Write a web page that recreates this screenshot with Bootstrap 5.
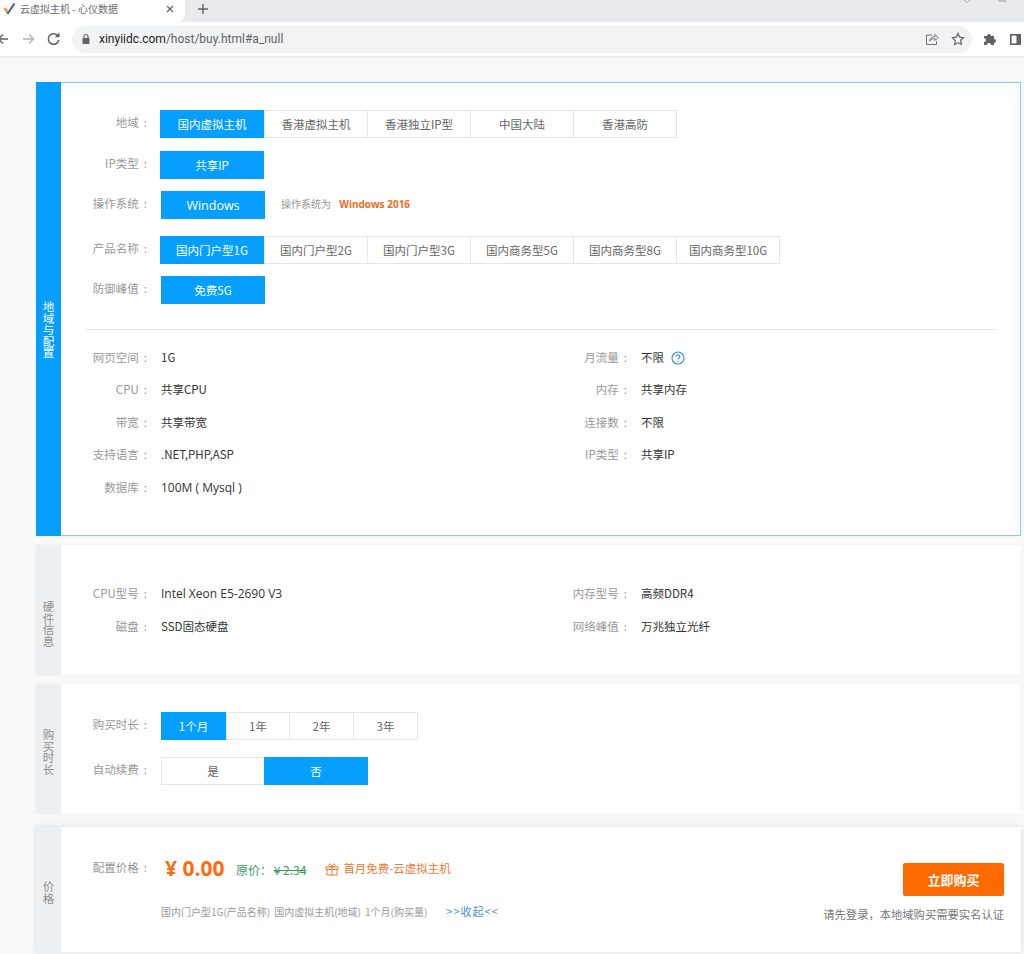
<!DOCTYPE html>
<html lang="zh-CN">
<head>
  <meta charset="UTF-8"/>
  <meta name="viewport" content="width=device-width, initial-scale=1.0"/>
  <title>云虚拟主机 - 心仪数据</title>
  <link rel="stylesheet" href="https://cdn.jsdelivr.net/npm/bootstrap@5.3.0/dist/css/bootstrap.min.css"/>
  <style>
    html, body { height: 954px; overflow: hidden; }
    body { background: #f9f9f9; font: 11.5px/1.5 "Noto Sans CJK SC", sans-serif; color: #333; }

    /* browser chrome */
    .tab-strip { height: 22px; background: #e8eaed; }
    .tab-active { width: 185px; background: #fff; border-bottom-right-radius: 8px; color: #6a6d71; font-size: 10px; padding: 0 0 5px 3px; }
    .tab-title { margin-left: 4px; width: 145px; }
    .tool-bar { height: 34px; background: #fff; border-bottom: 2px solid #ececec; box-sizing: content-box; }
    .omni { width: 900px; height: 27px; margin-left: 3px; background: #f1f3f4; border-radius: 14px; padding: 0 7px 0 9px; font: 12px "Roboto", sans-serif; color: #5f6368; }
    .omni b { font-weight: 400; color: #202124; }
    .lock-icon { margin-right: 8px; }
    .nav-icons { width: 72px; margin-left: -3px; }
    .win-marks { margin-left: auto; width: 60px; }
    .star-gap { margin-left: 12px; }
    .puzzle-gap { margin-left: 11px; }
    .sidepanel-gap { margin-left: 13px; }

    /* panels */
    .page-wrap { padding: 24px 3px 0 36px; }
    .buy-panel { background: #fff; box-shadow: 0 0 2px rgba(0,0,0,.07); }
    .side-tab { width: 25px; flex: none; background: #edf0f2; color: #8f8f8f; }
    .side-tab span { width: 12px; font-size: 11.5px; line-height: 11.5px; text-align: center; }
    .panel-region { height: 454px; margin-bottom: 9px; border: 1px solid #8fcde6; border-left: 0; }
    .panel-region .side-tab { background: #069fff; color: #fff; margin-top: -1px; margin-bottom: -1px; padding-top: 42px; }
    .panel-hardware { height: 130px; margin-bottom: 9px; }
    .panel-hardware .side-tab { padding-top: 28px; }
    .panel-time { height: 130px; margin-bottom: 13px; }
    .panel-time .side-tab { padding-top: 6px; }
    .panel-price { height: 125px; box-shadow: 0 0 6px rgba(0,0,0,.14); }
    .panel-price .side-tab { padding-top: 6px; }
    .panel-inner { padding-left: 25px; padding-right: 25px; }

    .lbl { width: 61px; flex: none; text-align: right; color: #999; white-space: pre; word-spacing: 2.5px; }
    .opt-row { height: 28px; }
    .opt-row .lbl { margin-top: -3px; }
    .opts { margin-left: 13px; }
    .opts.nudge { margin-left: 14px; }
    .opt { display: block; width: 104px; height: 28px; line-height: 26px; margin-left: -1px; border: 1px solid #e6e6e6; border-radius: 0; padding: 0; text-align: center; color: #666; background: #fff; text-decoration: none; }
    .opt:first-child { margin-left: 0; }
    .opt:first-child + .opt { margin-left: 0; }
    .opts.nudge .opt:first-child + .opt { margin-left: -1px; }
    .opt.on { background: #069fff; border-color: #069fff; color: #fff; position: relative; }
    .opt.sm { width: 65px; }
    .opts.nudge .opt.sm:nth-child(2) { margin-left: 0; width: 64px; }
    .opt-win { font: 12.5px/27px "Open Sans", sans-serif; }
    .region-body { padding: 27px 25px 0 25px; }
    .os-note { margin: 0 0 4px 16px; font-size: 10px; color: #999; }
    .os-note b { margin-left: 6px; color: #f26a1b; font: 700 10px "Open Sans", sans-serif; }
    .divider { margin: 25px 0 11px; border-top: 1px solid #e4e4e4; opacity: 1; }
    .spec-grid { display: grid; grid-template-columns: 480px 1fr; grid-auto-rows: 32.5px; }
    .spec { height: 32.5px; }
    .spec .val { margin-left: 14px; color: #333; }
    .spec .val-latin { font: 12px "Open Sans", sans-serif; }
    .help-dot { margin: 2px 0 0 7px; }

    .time-body { padding-top: 28px; }
    .price-body { padding-top: 29px; }
    .price-body .lbl { margin-top: -1px; }
    .price-num { font: 700 21px/24px "Open Sans", sans-serif; color: #ff6a0c; margin-left: 18px; width: 71px; }
    .old-price { color: #3c9a5f; font-size: 12px; margin-top: 4px; }
    .old-price s { margin-left: -1px; }
    .promo { color: #ea7a33; font-size: 11.5px; margin: 2px 0 0 19px; }
    .summary { font-size: 10px; color: #999; margin: 23px 0 0 75px; }
    .summary span { margin-right: 4px; }
    .fold-link { color: #4a90d9; font-size: 11px; margin-left: 15px; letter-spacing: 1px; text-decoration: none; }
    .buy-btn { width: 101px; height: 33px; background: #ff6a00; color: #fff; border: 0; border-radius: 2px; font: 700 13px/33px "Noto Sans CJK SC", sans-serif; padding: 0; }
    .buy-note { font-size: 11.3px; color: #777; margin-top: 10px; white-space: nowrap; }
    .price-right { width: 200px; padding: 36px 17px 0 0; }
  </style>
</head>
<body>
  <!-- browser frame -->
  <div class="tab-strip d-flex">
    <div class="tab-active d-flex align-items-center">
      <svg width="13" height="13" viewBox="0 0 13 13"><path d="M2 6.500 5 11 11.500 1.500" fill="none" stroke="#3c5a8a" stroke-width="2"/><path d="M1.500 6 4.500 10" stroke="#f0a030" stroke-width="2.500"/></svg>
      <span class="tab-title">云虚拟主机 - 心仪数据</span>
      <svg width="10" height="10" viewBox="0 0 10 10"><path d="M2 2l6 6M8 2l-6 6" stroke="#5f6368" stroke-width="1.200"/></svg>
    </div>
    <svg class="ms-2" width="20" height="18" viewBox="0 0 20 18"><path d="M10 4v10M5 9h10" stroke="#5f6368" stroke-width="1.400"/></svg>
    <svg class="win-marks" width="60" height="4" viewBox="0 0 60 4"><path d="M0 0l3 2.500L6 0" fill="none" stroke="#aaa"/><path d="M34 1h8" stroke="#999"/></svg>
  </div>
  <div class="tool-bar d-flex align-items-center">
    <div class="nav-icons d-flex align-items-center">
      <svg width="72" height="16" viewBox="0 0 72 16">
        <path d="M11 8H2M6 3.500 1.500 8 6 12.500" fill="none" stroke="#5f6368" stroke-width="1.500"/>
        <path d="M26 8h10M32 3.500 36.500 8 32 12.500" fill="none" stroke="#b4b7ba" stroke-width="1.500"/>
        <path d="M61 5a5.300 5.300 0 1 0 .8 4" fill="none" stroke="#5f6368" stroke-width="1.500"/><path d="M62.500 1.500v4.800h-4.800z" fill="#5f6368"/>
      </svg>
    </div>
    <div class="omni d-flex align-items-center">
      <svg class="lock-icon" width="10" height="12" viewBox="0 0 10 12"><path d="M3 5V3.500a2 2 0 0 1 4 0V5" fill="none" stroke="#5f6368" stroke-width="1.200"/><rect x="1.500" y="5" width="7" height="6" rx="1" fill="#5f6368"/></svg>
      <span><b>xinyiidc.com</b>/host/buy.html#a_null</span>
      <svg class="ms-auto" width="14" height="13" viewBox="0 0 14 13"><path d="M7 2H1.500v9.500h10V8M4.500 8c.5-3 3-4.500 5.500-4.500V1.500L13 4.500 10 7.500V5.500C8 5.500 6 6 4.500 8z" fill="none" stroke="#6f7276"/></svg>
      <svg class="star-gap" width="14" height="14" viewBox="0 0 14 14"><path d="M7 1.500l1.700 3.600 3.800.5-2.800 2.700.7 3.900L7 10.800l-3.400 1.900.7-3.900L1.500 5.600l3.800-.5z" fill="none" stroke="#5f6368" stroke-width="1.200"/></svg>
    </div>
    <svg class="puzzle-gap" width="14" height="14" viewBox="0 0 14 14"><path d="M1 4h3a2 2 0 0 1 4 0h3v3a2 2 0 0 1 0 4v2H8a2 2 0 0 0-4 0H1v-3a2 2 0 0 0 0-4z" fill="#5f6368"/></svg>
    <svg class="sidepanel-gap" width="11" height="11" viewBox="0 0 11 11"><rect x=".8" y=".8" width="9.400" height="9.400" fill="none" stroke="#5f6368" stroke-width="1.600"/><rect x="6.500" y="1" width="3.500" height="9" fill="#5f6368"/></svg>
  </div>

  <div class="page-wrap">
    <!-- region and config -->
    <section class="buy-panel panel-region d-flex">
      <div class="side-tab d-flex align-items-center justify-content-center"><span>地域与配置</span></div>
      <div class="region-body flex-grow-1">
        <div class="opt-row d-flex align-items-center">
          <div class="lbl">地域 :</div>
          <div class="opts d-flex">
            <a class="opt on">国内虚拟主机</a><a class="opt">香港虚拟主机</a><a class="opt">香港独立IP型</a><a class="opt">中国大陆</a><a class="opt">香港高防</a>
          </div>
        </div>
        <div class="opt-row d-flex align-items-center" style="margin-top:13px">
          <div class="lbl">IP类型 :</div>
          <div class="opts d-flex"><a class="opt on">共享IP</a></div>
        </div>
        <div class="opt-row d-flex align-items-center" style="margin-top:12px">
          <div class="lbl">操作系统 :</div>
          <div class="opts nudge d-flex"><a class="opt on opt-win">Windows</a></div>
          <div class="os-note">操作系统为 <b>Windows 2016</b></div>
        </div>
        <div class="opt-row d-flex align-items-center" style="margin-top:17px">
          <div class="lbl">产品名称 :</div>
          <div class="opts d-flex">
            <a class="opt on">国内门户型1G</a><a class="opt">国内门户型2G</a><a class="opt">国内门户型3G</a><a class="opt">国内商务型5G</a><a class="opt">国内商务型8G</a><a class="opt">国内商务型10G</a>
          </div>
        </div>
        <div class="opt-row d-flex align-items-center" style="margin-top:12px">
          <div class="lbl">防御峰值 :</div>
          <div class="opts nudge d-flex"><a class="opt on">免费5G</a></div>
        </div>
        <hr class="divider">
        <div class="spec-grid">
          <div class="spec d-flex align-items-center"><div class="lbl">网页空间 :</div><div class="val">1G</div></div>
          <div class="spec d-flex align-items-center"><div class="lbl">月流量 :</div><div class="val">不限</div>
            <svg class="help-dot" width="14" height="14" viewBox="0 0 14 14"><circle cx="7" cy="7" r="6" fill="none" stroke="#3b93d9" stroke-width="1.200"/><path d="M5.200 5.500a1.800 1.800 0 1 1 2.800 1.500c-.7.500-1 .8-1 1.500" fill="none" stroke="#3b93d9" stroke-width="1.100"/><circle cx="7" cy="10.300" r=".7" fill="#3b93d9"/></svg>
          </div>
          <div class="spec d-flex align-items-center"><div class="lbl">CPU :</div><div class="val">共享CPU</div></div>
          <div class="spec d-flex align-items-center"><div class="lbl">内存 :</div><div class="val">共享内存</div></div>
          <div class="spec d-flex align-items-center"><div class="lbl">带宽 :</div><div class="val">共享带宽</div></div>
          <div class="spec d-flex align-items-center"><div class="lbl">连接数 :</div><div class="val">不限</div></div>
          <div class="spec d-flex align-items-center"><div class="lbl">支持语言 :</div><div class="val">.NET,PHP,ASP</div></div>
          <div class="spec d-flex align-items-center"><div class="lbl">IP类型 :</div><div class="val">共享IP</div></div>
          <div class="spec d-flex align-items-center"><div class="lbl">数据库 :</div><div class="val val-latin">100M ( Mysql )</div></div>
        </div>
      </div>
    </section>

    <!-- hardware -->
    <section class="buy-panel panel-hardware d-flex">
      <div class="side-tab d-flex align-items-center justify-content-center"><span>硬件信息</span></div>
      <div class="flex-grow-1 panel-inner d-flex align-items-center">
        <div class="spec-grid flex-grow-1">
          <div class="spec d-flex align-items-center"><div class="lbl">CPU型号 :</div><div class="val val-latin">Intel Xeon E5-2690 V3</div></div>
          <div class="spec d-flex align-items-center"><div class="lbl">内存型号 :</div><div class="val">高频DDR4</div></div>
          <div class="spec d-flex align-items-center"><div class="lbl">磁盘 :</div><div class="val">SSD固态硬盘</div></div>
          <div class="spec d-flex align-items-center"><div class="lbl">网络峰值 :</div><div class="val">万兆独立光纤</div></div>
        </div>
      </div>
    </section>

    <!-- duration -->
    <section class="buy-panel panel-time d-flex">
      <div class="side-tab d-flex align-items-center justify-content-center"><span>购买时长</span></div>
      <div class="flex-grow-1 panel-inner time-body">
        <div class="opt-row d-flex align-items-center">
          <div class="lbl">购买时长 :</div>
          <div class="opts nudge d-flex"><a class="opt sm on">1个月</a><a class="opt sm">1年</a><a class="opt sm">2年</a><a class="opt sm">3年</a></div>
        </div>
        <div class="opt-row d-flex align-items-center" style="margin-top:17px">
          <div class="lbl">自动续费 :</div>
          <div class="opts nudge d-flex"><a class="opt">是</a><a class="opt on">否</a></div>
        </div>
      </div>
    </section>

    <!-- price -->
    <section class="buy-panel panel-price d-flex">
      <div class="side-tab d-flex align-items-center justify-content-center"><span>价格</span></div>
      <div class="flex-grow-1 d-flex justify-content-between">
        <div class="panel-inner price-body">
          <div class="d-flex align-items-center">
            <div class="lbl">配置价格 :</div>
            <div class="price-num">¥ 0.00</div>
            <div class="old-price">原价： <s>¥ 2.34</s></div>
            <div class="promo d-flex align-items-center">
              <svg class="me-1" width="14" height="13" viewBox="0 0 14 13"><path d="M1 4h12v2.500H1zM2 6.500V12h10V6.500M7 4v8M7 4C5 4 3.500 3 4 1.500S7 2 7 4c0-2 2.500-4 3-2.500S9 4 7 4z" fill="none" stroke="#ea7a33"/></svg>
              首月免费-云虚拟主机
            </div>
          </div>
          <div class="summary">
            <span>国内门户型1G(产品名称)</span><span>国内虚拟主机(地域)</span><span>1个月(购买量)</span><a class="fold-link" href="#">&gt;&gt;收起&lt;&lt;</a>
          </div>
        </div>
        <div class="price-right text-end">
          <button class="buy-btn" type="button">立即购买</button>
          <div class="buy-note">请先登录，本地域购买需要实名认证</div>
        </div>
      </div>
    </section>
  </div>

  <script src="https://cdn.jsdelivr.net/npm/bootstrap@5.3.0/dist/js/bootstrap.bundle.min.js"></script>
</body>
</html>
